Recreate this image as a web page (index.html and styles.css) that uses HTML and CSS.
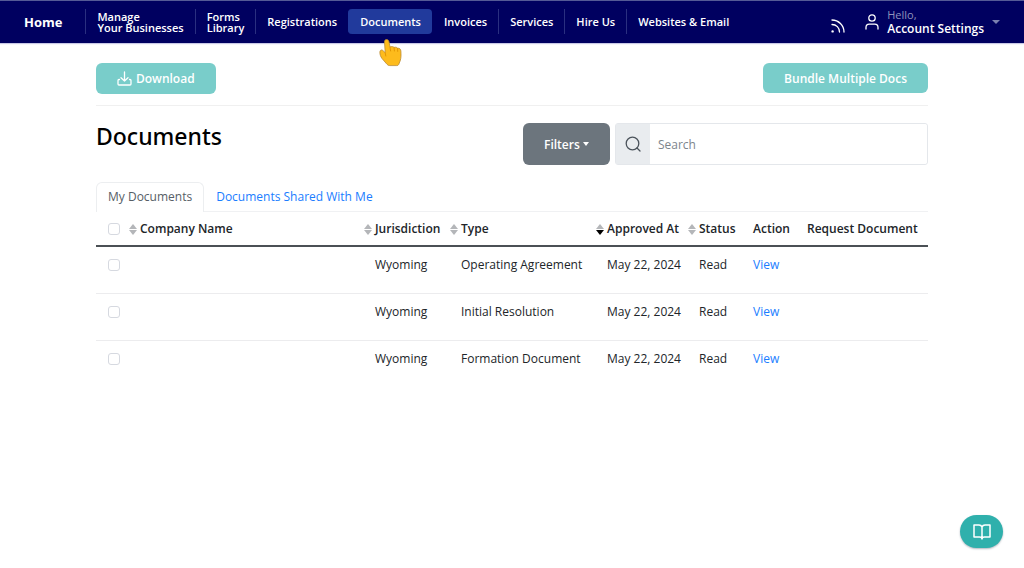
FILE: index.html
```
<!DOCTYPE html>
<html lang="en">
<head>
    <meta charset="UTF-8">
    <meta name="viewport" content="width=device-width, initial-scale=1.0">
    <title>Documents</title>
    <link rel="stylesheet" href="styles.css">
</head>
<body>
    <header class="topbar">
        <a href="#" class="home">Home</a>
        <nav class="menu">
            <a href="#" class="menu-item">Manage<br>Your Businesses</a>
            <a href="#" class="menu-item">Forms<br>Library</a>
            <a href="#" class="menu-item">Registrations</a>
            <a href="#" class="menu-item active">Documents
                <svg class="pointer" width="24" height="30" viewBox="0 0 24 30">
                    <path d="M7.5 1.5c1.500 0 2.300 1 2.500 2.300l1 5.200c2-.8 3.300-.4 4 .4 1.700-.5 3-.1 3.600.8 2-.2 3.200.9 3.300 3 .2 3.600.3 6.800-.8 9.800l-1.300 3.200c-.4 1-1 1.400-2 1.400h-7c-1.200 0-2-.4-2.800-1.300L3 20.500c-1.300-1.800-2.300-4.200-2.100-6.600.1-1.800 1.600-2.500 2.900-1.500l2.400 2.300L5.500 4c-.1-1.500.7-2.500 2-2.500z" fill="#fdbb1c" stroke="#b98a35" stroke-width="0.8"/>
                    <path d="M11 9.200l.6 3.800M15 9.600l.4 3.400M18.600 10.400l.1 3M6.200 14.700l.6 3.300" fill="none" stroke="#e09200" stroke-width="0.9" stroke-linecap="round"/>
                </svg>
            </a>
            <a href="#" class="menu-item">Invoices</a>
            <a href="#" class="menu-item">Services</a>
            <a href="#" class="menu-item">Hire Us</a>
            <a href="#" class="menu-item">Websites &amp; Email</a>
        </nav>
        <a href="#" class="feed" aria-label="News feed">
            <svg width="14" height="14" viewBox="0 0 14 14" fill="none" stroke="#fff" stroke-width="1.300" stroke-linecap="round">
                <path d="M1 1c6.500 0 12 5.500 12 12M1 5.500c4.300 0 7.500 3.200 7.500 7.500"/>
                <circle cx="1.600" cy="12.400" r="1.200" fill="#fff" stroke="none"/>
            </svg>
        </a>
        <button type="button" class="account">
            <svg width="14" height="16" viewBox="0 0 14 16" fill="none" stroke="#fff" stroke-width="1.300" stroke-linecap="round">
                <circle cx="7" cy="4" r="3.200"/>
                <path d="M1 15v-1.500c0-2 1.300-3.300 3.200-3.300h5.600c1.900 0 3.200 1.300 3.200 3.300V15"/>
            </svg>
            <span class="account-text"><span class="hello">Hello,</span><span>Account Settings</span></span>
            <span class="caret account-caret"></span>
        </button>
    </header>

    <main class="page">
        <div class="actions">
            <button type="button" class="btn btn-download">
                <svg width="15" height="15" viewBox="0 0 15 15" fill="none" stroke="#fff" stroke-width="1.300" stroke-linecap="round" stroke-linejoin="round">
                    <path d="M7.500 1v9M4 6.800L7.500 10 11 6.800M2.500 8.500H2c-.7 0-1 .3-1 1V13c0 .7.300 1 1 1h11c.7 0 1-.3 1-1V9.500c0-.7-.3-1-1-1h-.5"/>
                </svg>
                Download
            </button>
            <button type="button" class="btn">Bundle Multiple Docs</button>
        </div>

        <div class="heading">
            <h1>Documents</h1>
            <div class="tools">
                <button type="button" class="filters">Filters <span class="caret"></span></button>
                <div class="search">
                    <label for="search" aria-label="Search">
                        <svg width="16" height="16" viewBox="0 0 16 16" fill="none" stroke="#4b535b" stroke-width="1.300" stroke-linecap="round">
                            <circle cx="7.500" cy="7.500" r="6.300"/>
                            <path d="M12 12l3 3"/>
                        </svg>
                    </label>
                    <input type="text" id="search" placeholder="Search">
                </div>
            </div>
        </div>

        <div class="tabs">
            <a href="#" class="tab current">My Documents</a>
            <a href="#" class="tab">Documents Shared With Me</a>
        </div>

        <table class="docs">
            <colgroup>
                <col class="col-check">
                <col>
                <col class="col-jurisdiction">
                <col class="col-type">
                <col class="col-approved">
                <col class="col-status">
                <col class="col-action">
                <col class="col-request">
            </colgroup>
            <thead>
                <tr>
                    <th><input type="checkbox" aria-label="Select all"></th>
                    <th class="sortable"><svg class="sort" width="8" height="11" viewBox="0 0 8 11"><path class="up" d="M4 0l4 5H0z"/><path class="down" d="M4 11l4-5H0z"/></svg>Company Name</th>
                    <th class="sortable"><svg class="sort" width="8" height="11" viewBox="0 0 8 11"><path class="up" d="M4 0l4 5H0z"/><path class="down" d="M4 11l4-5H0z"/></svg>Jurisdiction</th>
                    <th class="sortable"><svg class="sort" width="8" height="11" viewBox="0 0 8 11"><path class="up" d="M4 0l4 5H0z"/><path class="down" d="M4 11l4-5H0z"/></svg>Type</th>
                    <th class="sortable sorted"><svg class="sort" width="8" height="11" viewBox="0 0 8 11"><path class="up" d="M4 0l4 5H0z"/><path class="down" d="M4 11l4-5H0z"/></svg>Approved At</th>
                    <th class="sortable"><svg class="sort" width="8" height="11" viewBox="0 0 8 11"><path class="up" d="M4 0l4 5H0z"/><path class="down" d="M4 11l4-5H0z"/></svg>Status</th>
                    <th>Action</th>
                    <th>Request Document</th>
                </tr>
            </thead>
            <tbody>
                <tr>
                    <td><input type="checkbox" aria-label="Select Operating Agreement"></td>
                    <td></td>
                    <td>Wyoming</td>
                    <td>Operating Agreement</td>
                    <td>May 22, 2024</td>
                    <td>Read</td>
                    <td><a href="#">View</a></td>
                    <td></td>
                </tr>
                <tr>
                    <td><input type="checkbox" aria-label="Select Initial Resolution"></td>
                    <td></td>
                    <td>Wyoming</td>
                    <td>Initial Resolution</td>
                    <td>May 22, 2024</td>
                    <td>Read</td>
                    <td><a href="#">View</a></td>
                    <td></td>
                </tr>
                <tr>
                    <td><input type="checkbox" aria-label="Select Formation Document"></td>
                    <td></td>
                    <td>Wyoming</td>
                    <td>Formation Document</td>
                    <td>May 22, 2024</td>
                    <td>Read</td>
                    <td><a href="#">View</a></td>
                    <td></td>
                </tr>
            </tbody>
        </table>
    </main>

    <button type="button" class="guide" aria-label="Guide">
        <svg width="18" height="16" viewBox="0 0 18 16" fill="none" stroke="#fff" stroke-width="1.500" stroke-linejoin="round" stroke-linecap="round">
            <path d="M9 3C8.500 1.700 7.500 1 6 1H1v12h5.500c1.500 0 2.500.5 2.500 2 0-1.500 1-2 2.500-2H17V1h-5c-1.500 0-2.500.7-3 2zM9 3v12"/>
        </svg>
    </button>
</body>
</html>
```

FILE: styles.css
```
* {
    box-sizing: border-box;
}

body {
    margin: 0;
    font-family: "Open Sans", "Noto Sans", sans-serif;
    font-size: 12px;
    font-weight: 500;
    line-height: 18px;
    color: #212529;
    background: #fff;
}

a {
    color: #1a7dff;
    text-decoration: none;
}

button,
input {
    font-family: inherit;
    font-size: inherit;
}

button {
    border: none;
    cursor: pointer;
}

/* top bar */
.topbar {
    display: flex;
    align-items: center;
    height: 43px;
    padding: 0 24px;
    background: #000060;
    box-shadow: inset 0 1px #555a96, 0 1px 1px #c9c9e6;
}

.topbar a {
    color: #fff;
    font-weight: 600;
}

.topbar .home {
    margin-right: 23px;
    font-size: 13px;
    font-weight: 700;
}

.menu {
    display: flex;
    flex: 1;
}

.menu-item {
    position: relative;
    display: flex;
    align-items: center;
    height: 25px;
    padding: 0 11px;
    border-left: 1px solid #2a2f80;
    font-size: 11px;
    line-height: 11px;
    white-space: nowrap;
}

.menu-item.active {
    background: #213a9c;
    border-color: #213a9c;
    border-radius: 4px;
}

.menu-item.active + .menu-item {
    border-color: transparent;
}

.pointer {
    position: absolute;
    left: 30px;
    top: 29px;
    z-index: 2;
}

.feed {
    display: flex;
    margin: 8px 20px 0 0;
}

.account {
    display: flex;
    align-items: center;
    gap: 8px;
    padding: 0;
    background: none;
    color: #fff;
    font-weight: 600;
    line-height: 14px;
    text-align: left;
}

.account-text {
    display: flex;
    flex-direction: column;
}

.hello {
    font-size: 11px;
    font-weight: 500;
    color: #8f93bd;
}

.caret {
    display: inline-block;
    border: 4px solid transparent;
    border-top-color: currentColor;
    border-bottom: none;
}

.account-caret {
    color: #7b80b0;
}

/* page */
.page {
    padding: 20px 96px 0;
}

.actions {
    display: flex;
    justify-content: space-between;
    align-items: flex-start;
    padding-bottom: 11px;
    border-bottom: 1px solid #f0f0f0;
}

.btn {
    display: flex;
    align-items: center;
    gap: 4px;
    height: 30px;
    padding: 0 21px;
    border-radius: 6px;
    background: #79cdca;
    color: #fff;
    font-weight: 600;
}

.btn-download {
    height: 31px;
}

.heading {
    display: flex;
    justify-content: space-between;
    margin: 17px 0;
}

h1 {
    margin: 0;
    font-family: "Noto Sans", sans-serif;
    font-size: 23px;
    font-weight: 500;
    line-height: 26px;
    color: #000;
}

.tools {
    display: flex;
    gap: 5px;
    width: 405px;
    height: 42px;
}

.filters {
    padding: 0 21px;
    border-radius: 6px;
    background: #6c757d;
    color: #fff;
    font-size: 12px;
    font-weight: 600;
    white-space: nowrap;
}

.filters .caret {
    border-width: 3px;
    border-top-width: 4px;
    border-bottom: none;
    vertical-align: 3px;
}

.search {
    display: flex;
    flex: 1;
    border: 1px solid #e4e7eb;
    border-radius: 3px;
}

.search label {
    display: flex;
    align-items: center;
    justify-content: center;
    width: 34px;
    background: #e9ecef;
}

.search input {
    flex: 1;
    min-width: 0;
    padding: 0 8px;
    border: none;
    border-radius: 3px;
    font-size: 12px;
    color: #495057;
}

.search input::placeholder {
    color: #7d858c;
}

/* tabs */
.tabs {
    display: flex;
    border-bottom: 1px solid #f0f1f3;
}

.tab {
    padding: 5px 11px;
    border: 1px solid transparent;
    border-bottom: none;
    font-size: 12px;
}

.tab.current {
    margin-bottom: -1px;
    border-color: #eceef0;
    border-radius: 6px 6px 0 0;
    background: #fff;
    color: #565e66;
}

/* documents table */
.docs {
    width: 100%;
    table-layout: fixed;
    border-collapse: collapse;
    font-size: 12px;
    white-space: nowrap;
}

.docs th,
.docs td {
    padding: 0 0 0 12px;
    text-align: left;
}

.docs th {
    height: 34px;
    font-weight: 600;
    border-bottom: 2px solid #4b5055;
}

.docs th.sortable {
    padding-left: 1px;
}

.docs td {
    height: 47px;
    padding-top: 9px;
    vertical-align: top;
}

.docs tbody tr + tr td {
    border-top: 1px solid #ececee;
}

.col-check { width: 32px; }
.col-jurisdiction { width: 86px; }
.col-type { width: 146px; }
.col-approved { width: 92px; }
.col-status { width: 54px; }
.col-action { width: 54px; }
.col-request { width: 133px; }

.sort {
    margin-right: 3px;
    vertical-align: -2px;
    fill: #b4b6b9;
}

.sorted .down {
    fill: #000;
}

.docs input {
    appearance: none;
    display: block;
    width: 12px;
    height: 12px;
    margin: 0;
    border: 1px solid #d6d9e0;
    border-radius: 3px;
    background: #fff;
}

.docs td input {
    margin-top: 3px;
}

/* floating help button */
.guide {
    position: fixed;
    right: 21px;
    bottom: 20px;
    display: flex;
    align-items: center;
    justify-content: center;
    width: 43px;
    height: 33px;
    padding: 0;
    border-radius: 17px;
    background: #2fb0ac;
    box-shadow: 0 1px 2px #b0b8c0;
}
```
